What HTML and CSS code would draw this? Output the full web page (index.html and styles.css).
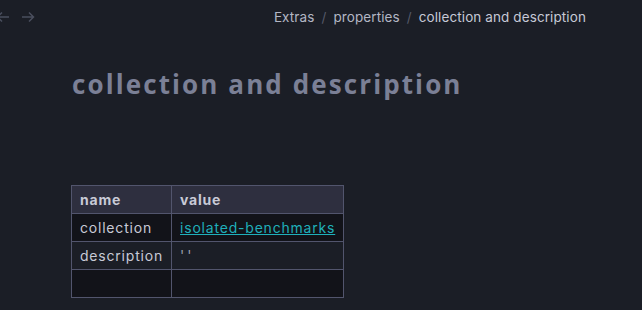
FILE: index.html
```html
<!DOCTYPE html>
<html lang="en">
<head>
    <meta charset="UTF-8">
    <title>collection and description</title>
    <link rel="stylesheet" href="styles.css">
</head>
<body>
    <div class="topbar">
        <div class="nav">
            <svg class="arrow back" width="14" height="12" viewBox="0 0 14 12"><path d="M13 6H2M6 1.5L1.5 6L6 10.5" fill="none" stroke="currentColor" stroke-width="1.5"/></svg>
            <svg class="arrow" width="14" height="12" viewBox="0 0 14 12"><path d="M1 6H12M8 1.5L12.5 6L8 10.5" fill="none" stroke="currentColor" stroke-width="1.5"/></svg>
        </div>
        <div class="crumbs">
            <span>Extras</span>
            <span class="sep">/</span>
            <span>properties</span>
            <span class="sep">/</span>
            <span class="current">collection and description</span>
        </div>
    </div>
    <div class="page">
        <h1 class="title">collection and description</h1>
        <table class="props">
            <thead>
                <tr><th class="key">name</th><th>value</th></tr>
            </thead>
            <tbody>
                <tr class="dark"><td class="key">collection</td><td><a href="#">isolated-benchmarks</a></td></tr>
                <tr><td class="key">description</td><td class="quote">''</td></tr>
                <tr class="dark"><td class="key"></td><td></td></tr>
            </tbody>
        </table>
    </div>
</body>
</html>
```

FILE: styles.css
```css
html, body {
    margin: 0;
    height: 100%;
    background: #1b1e26;
    overflow: hidden;
    font-family: Inter, "Open Sans", sans-serif;
}

.topbar {
    display: flex;
    align-items: center;
    justify-content: space-between;
    height: 34px;
}
.nav {
    display: flex;
    gap: 11px;
    margin-left: -4px;
    color: #4a4f5e;
}
.crumbs {
    display: flex;
    gap: 7px;
    padding-right: 56px;
    font-size: 13.5px;
    letter-spacing: 0.1px;
    color: #b3b6c4;
}
.crumbs .sep {
    color: #565a69;
}
.crumbs .current {
    color: #c6c9d6;
}

.page {
    padding-left: 72px;
}
.title {
    margin: 33px 0 0;
    font-family: "Open Sans", sans-serif;
    font-size: 26px;
    font-weight: 700;
    letter-spacing: 2.1px;
    color: #7b8096;
    line-height: 34px;
}

.props {
    margin-top: 84px;
    margin-left: -1px;
    border-collapse: collapse;
    font-size: 14px;
    letter-spacing: 0.8px;
    color: #c8cad6;
}
.props th, .props td {
    border: 1px solid #52556d;
    height: 27px;
    padding: 0 8px;
    text-align: left;
}
.props th {
    background: #2e2f3f;
    font-weight: 700;
}
.props .key {
    width: 82px;
}
.props tr.dark td {
    background: #121319;
}
.props a {
    color: #1fb0bb;
}
.props .quote {
    color: #9a9caa;
    letter-spacing: 3px;
}
```
